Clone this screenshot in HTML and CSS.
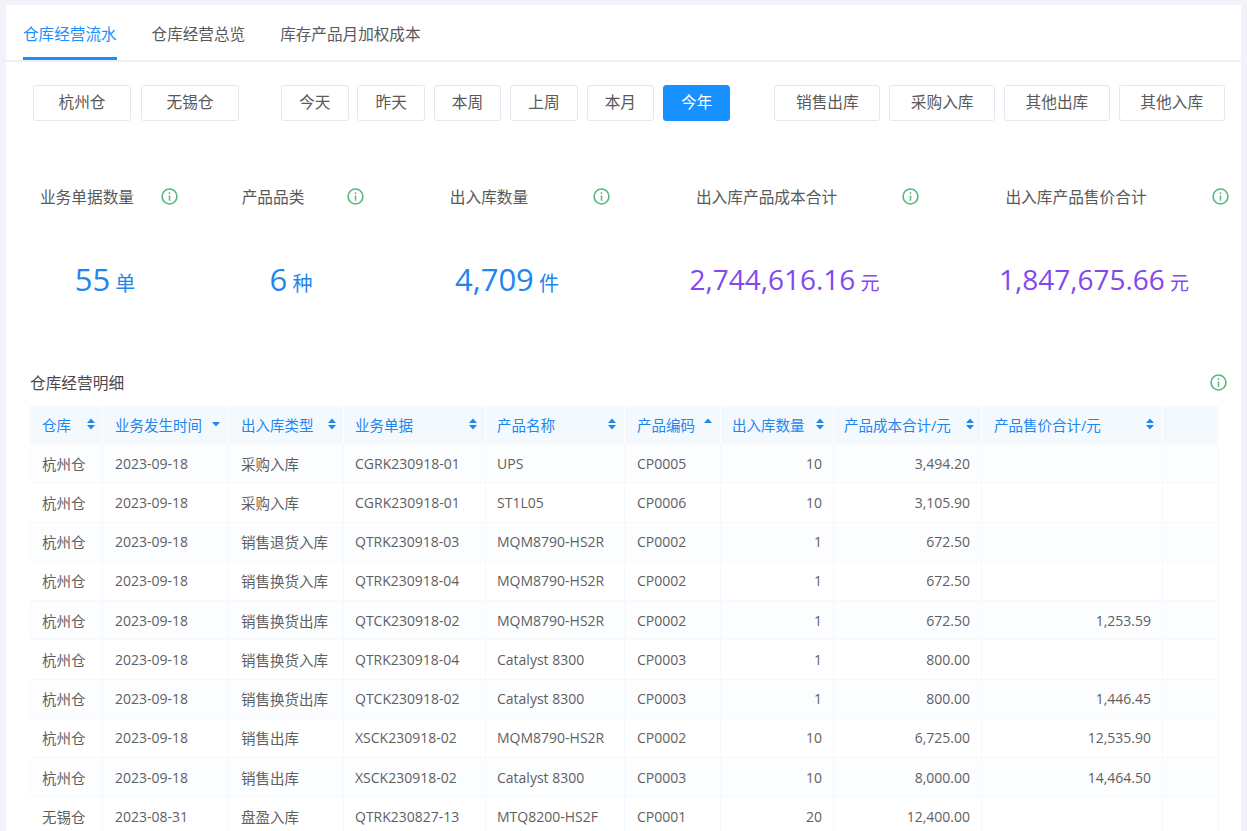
FILE: index.html
```html
<!DOCTYPE html>
<html lang="zh-CN">
<head>
<meta charset="utf-8">
<title>仓库经营流水</title>
<link rel="stylesheet" href="styles.css">
</head>
<body>
<svg class="defs" width="0" height="0" aria-hidden="true">
  <symbol id="info" viewBox="0 0 16 16">
    <circle cx="8" cy="8" r="7" fill="none" stroke="currentColor" stroke-width="1.5"/>
    <rect x="7.3" y="7" width="1.4" height="5" fill="currentColor"/>
    <rect x="7.3" y="4" width="1.4" height="1.6" fill="currentColor"/>
  </symbol>
  <symbol id="sort" viewBox="0 0 10 14">
    <path d="M5 1.5 9 6H1z"/>
    <path d="M5 12.5 1 8h8z"/>
  </symbol>
  <symbol id="sort-up" viewBox="0 0 10 14">
    <path d="M5 1.5 9 6H1z"/>
  </symbol>
  <symbol id="sort-down" viewBox="0 0 10 14">
    <path d="M5 9.5 1 5h8z"/>
  </symbol>
</svg>
<main class="card">
  <nav class="tabs">
    <a class="tab active">仓库经营流水</a>
    <a class="tab">仓库经营总览</a>
    <a class="tab">库存产品月加权成本</a>
  </nav>
  <section class="filters">
    <div class="group g-wh"><button class="btn">杭州仓</button><button class="btn">无锡仓</button></div>
    <div class="group g-date"><button class="btn">今天</button><button class="btn">昨天</button><button class="btn">本周</button><button class="btn">上周</button><button class="btn">本月</button><button class="btn primary">今年</button></div>
    <div class="group g-type"><button class="btn">销售出库</button><button class="btn">采购入库</button><button class="btn">其他出库</button><button class="btn">其他入库</button></div>
  </section>
  <section class="stats">
    <div class="stat"><div class="stat-head"><span>业务单据数量</span><svg class="info"><use href="#info"/></svg></div><div class="stat-val"><b>55</b> <i>单</i></div></div>
    <div class="stat"><div class="stat-head"><span>产品品类</span><svg class="info"><use href="#info"/></svg></div><div class="stat-val"><b>6</b> <i>种</i></div></div>
    <div class="stat"><div class="stat-head"><span>出入库数量</span><svg class="info"><use href="#info"/></svg></div><div class="stat-val"><b>4,709</b> <i>件</i></div></div>
    <div class="stat"><div class="stat-head"><span>出入库产品成本合计</span><svg class="info"><use href="#info"/></svg></div><div class="stat-val purple"><b>2,744,616.16</b> <i>元</i></div></div>
    <div class="stat"><div class="stat-head"><span>出入库产品售价合计</span><svg class="info"><use href="#info"/></svg></div><div class="stat-val purple"><b>1,847,675.66</b> <i>元</i></div></div>
  </section>
  <section class="detail">
    <div class="detail-head"><h2>仓库经营明细</h2><svg class="info"><use href="#info"/></svg></div>
    <table class="grid">
      <colgroup><col class="c1"><col class="c2"><col class="c3"><col class="c4"><col class="c5"><col class="c6"><col class="c7"><col class="c8"><col class="c9"><col class="c10"></colgroup>
      <thead><tr>
        <th><div class="th"><span>仓库</span><svg class="sort"><use href="#sort"/></svg></div></th>
        <th><div class="th"><span>业务发生时间</span><svg class="sort"><use href="#sort-down"/></svg></div></th>
        <th><div class="th"><span>出入库类型</span><svg class="sort"><use href="#sort"/></svg></div></th>
        <th><div class="th"><span>业务单据</span><svg class="sort"><use href="#sort"/></svg></div></th>
        <th><div class="th"><span>产品名称</span><svg class="sort"><use href="#sort"/></svg></div></th>
        <th><div class="th"><span>产品编码</span><svg class="sort"><use href="#sort-up"/></svg></div></th>
        <th><div class="th"><span>出入库数量</span><svg class="sort"><use href="#sort"/></svg></div></th>
        <th><div class="th"><span>产品成本合计/元</span><svg class="sort"><use href="#sort"/></svg></div></th>
        <th><div class="th"><span>产品售价合计/元</span><svg class="sort"><use href="#sort"/></svg></div></th>
        <th></th>
      </tr></thead>
      <tbody>
        <tr><td>杭州仓</td><td>2023-09-18</td><td>采购入库</td><td>CGRK230918-01</td><td>UPS</td><td>CP0005</td><td class="r">10</td><td class="r">3,494.20</td><td class="r"></td><td></td></tr>
        <tr><td>杭州仓</td><td>2023-09-18</td><td>采购入库</td><td>CGRK230918-01</td><td>ST1L05</td><td>CP0006</td><td class="r">10</td><td class="r">3,105.90</td><td class="r"></td><td></td></tr>
        <tr><td>杭州仓</td><td>2023-09-18</td><td>销售退货入库</td><td>QTRK230918-03</td><td>MQM8790-HS2R</td><td>CP0002</td><td class="r">1</td><td class="r">672.50</td><td class="r"></td><td></td></tr>
        <tr><td>杭州仓</td><td>2023-09-18</td><td>销售换货入库</td><td>QTRK230918-04</td><td>MQM8790-HS2R</td><td>CP0002</td><td class="r">1</td><td class="r">672.50</td><td class="r"></td><td></td></tr>
        <tr><td>杭州仓</td><td>2023-09-18</td><td>销售换货出库</td><td>QTCK230918-02</td><td>MQM8790-HS2R</td><td>CP0002</td><td class="r">1</td><td class="r">672.50</td><td class="r">1,253.59</td><td></td></tr>
        <tr><td>杭州仓</td><td>2023-09-18</td><td>销售换货入库</td><td>QTRK230918-04</td><td>Catalyst 8300</td><td>CP0003</td><td class="r">1</td><td class="r">800.00</td><td class="r"></td><td></td></tr>
        <tr><td>杭州仓</td><td>2023-09-18</td><td>销售换货出库</td><td>QTCK230918-02</td><td>Catalyst 8300</td><td>CP0003</td><td class="r">1</td><td class="r">800.00</td><td class="r">1,446.45</td><td></td></tr>
        <tr><td>杭州仓</td><td>2023-09-18</td><td>销售出库</td><td>XSCK230918-02</td><td>MQM8790-HS2R</td><td>CP0002</td><td class="r">10</td><td class="r">6,725.00</td><td class="r">12,535.90</td><td></td></tr>
        <tr><td>杭州仓</td><td>2023-09-18</td><td>销售出库</td><td>XSCK230918-02</td><td>Catalyst 8300</td><td>CP0003</td><td class="r">10</td><td class="r">8,000.00</td><td class="r">14,464.50</td><td></td></tr>
        <tr><td>无锡仓</td><td>2023-08-31</td><td>盘盈入库</td><td>QTRK230827-13</td><td>MTQ8200-HS2F</td><td>CP0001</td><td class="r">20</td><td class="r">12,400.00</td><td class="r"></td><td></td></tr>
      </tbody>
    </table>
  </section>
</main>
</body>
</html>
```
FILE: styles.css
```css
* { box-sizing: border-box; }
html, body { height: 100%; }
body {
  margin: 0;
  height: 831px;
  overflow: hidden;
  background: #f2f3f8;
  padding: 5px 6px 0 6px;
  font-family: "Open Sans", "Noto Sans CJK SC", sans-serif;
  color: #595959;
  font-size: 14px;
}
.defs { position: absolute; }
.card { background: #fff; height: 900px; }
.tabs {
  display: flex;
  gap: 35px;
  height: 57px;
  padding-left: 17px;
  border-bottom: 2px solid #f0f0f0;
}
.tab {
  height: 55px;
  padding-top: 17px;
  line-height: 24px;
  font-size: 15.6px;
  color: #595959;
}
.tab.active { color: #1890ff; border-bottom: 3px solid #1890ff; }
.filters {
  display: flex;
  padding: 23px 0 0 27px;
}
.group { display: flex; gap: 9px; }
.g-wh { margin-right: 42px; gap: 10px; }
.g-date { margin-right: 44px; gap: 8.9px; }
.btn {
  height: 36px;
  background: #fff;
  border: 1px solid #e4e7ed;
  border-radius: 3px;
  font: inherit;
  font-size: 15.7px;
  line-height: 32px;
  color: #595959;
  padding: 0 0 2px;
}
.g-wh .btn { width: 98px; }
.g-date .btn { width: 67.5px; }
.g-type .btn { width: 105.8px; }
.btn.primary { background: #1890ff; border-color: #1890ff; color: #fff; }
.stats {
  display: grid;
  grid-template-columns: 186px 186px 246px 309px 310px;
  margin-top: 65px;
  margin-left: -14px;
}
.stat-head {
  display: flex;
  justify-content: center;
  align-items: center;
  position: relative;
  height: 22px;
  padding: 0 2px 2px 6px;
  font-size: 15.7px;
  color: #595959;
}
.info { width: 17px; height: 17px; color: #52b97c; flex: none; }
.stat-head .info { position: absolute; right: 0; top: 2px; }
.stat-val {
  margin-top: 51px;
  height: 40px;
  line-height: 40px;
  text-align: center;
  color: #1e86ee;
  font-size: 20px;
  white-space: nowrap;
  padding-left: 40px;
}
.stat-val b { font-weight: 400; font-size: 31px; }
.stat-val i { font-style: normal; }
.purple { color: #8547f0; }
.purple b { font-size: 28px; }
.purple i { font-size: 19px; }
.detail { padding: 0 14px 0 24px; margin-top: 71px; }
.detail-head {
  display: flex;
  justify-content: space-between;
  align-items: center;
  height: 24px;
}
.detail-head h2 { margin: 0; font-size: 15.7px; font-weight: 400; color: #4a4a4a; }
.grid {
  width: 1189px;
  margin-top: 12px;
  table-layout: fixed;
  border-collapse: separate;
  border-spacing: 0;
  font-size: 14px;
}
.c1 { width: 73px; }
.c2 { width: 126px; }
.c3 { width: 115px; }
.c4 { width: 142px; }
.c5 { width: 139px; }
.c6 { width: 96px; }
.c7 { width: 113px; }
.c8 { width: 148px; }
.c9 { width: 181px; }
.c10 { width: 56px; }
th {
  height: 38px;
  padding: 0 7px 2px 12px;
  background: #f4f9fe;
  border-right: 1px solid #fff;
  color: #1e86ee;
  font-weight: 400;
  font-size: 14.5px;
  text-align: left;
}
th:nth-child(1), th:nth-child(3), th:nth-child(8) { padding-right: 6px; }
th:nth-child(4), th:nth-child(5), th:nth-child(7) { padding-left: 11px; }
th:nth-child(7) { padding-right: 8px; }
th:nth-child(8) { padding-left: 10px; }
.th { display: flex; justify-content: space-between; align-items: center; white-space: nowrap; }
.sort { width: 10px; height: 14px; flex: none; fill: #1e86ee; }
td {
  height: 39.25px;
  padding: 0 12px;
  border-right: 1px solid #f5f8fc;
  border-bottom: 1px solid #f5f8fc;
  white-space: nowrap;
  color: #5f5f5f;
}
td:nth-child(1), td:nth-child(3) { font-size: 14.5px; }
td:nth-child(4), td:nth-child(5) { padding-left: 11px; }
tbody tr:nth-child(odd) td { background: #fbfdff; }
td.r { text-align: right; padding-right: 11px; }
```
